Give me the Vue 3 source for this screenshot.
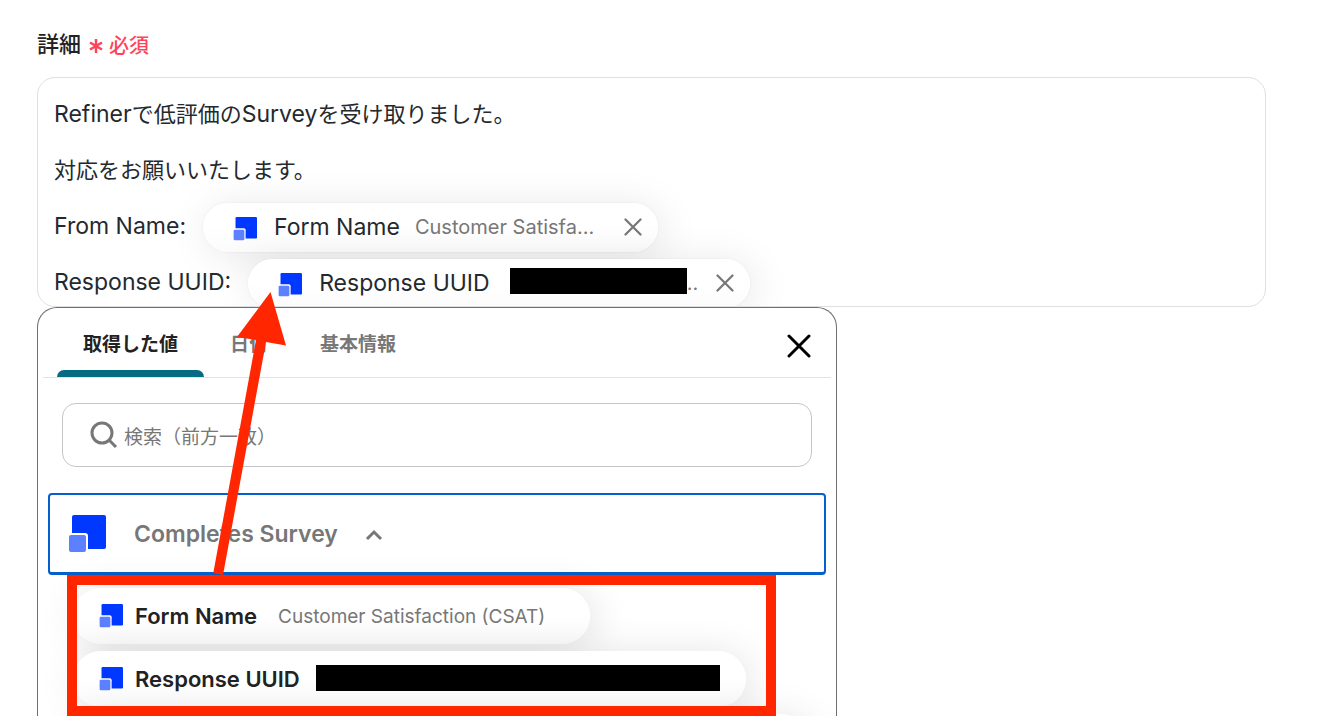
<script setup>
import { ref } from 'vue'

const fields = [
  { label: 'From Name:', name: 'Form Name', value: 'Customer Satisfa...' },
  { label: 'Response UUID:', name: 'Response UUID', masked: true }
]
const tabs = ['取得した値', '日付', '基本情報']
const active = ref(0)
const query = ref('')
</script>

<template>
  <main class="page">
    <svg class="defs" aria-hidden="true">
      <symbol id="brand" viewBox="0 0 38 38">
        <rect x="4" y="0" width="34" height="34" rx="2" fill="#0038ff" />
        <rect x="-1" y="18" width="21" height="22" rx="3" fill="#fff" />
        <rect x="1" y="20" width="17" height="17" rx="2" fill="#5c80ff" />
      </symbol>
      <symbol id="cross" viewBox="0 0 24 24">
        <path d="M2 2 22 22M22 2 2 22" fill="none" stroke="currentColor" stroke-linecap="round" />
      </symbol>
    </svg>

    <div class="heading">
      <span id="detail-label" class="title">詳細</span>
      <span class="required">
        <svg class="star" viewBox="0 0 14 16" aria-hidden="true">
          <path d="M7 1v14M1 4.500l12 7M13 4.500l-12 7" fill="none" stroke="currentColor" stroke-width="2.500" />
        </svg>
        必須
      </span>
    </div>

    <div class="editor" role="textbox" aria-multiline="true" aria-labelledby="detail-label" tabindex="0">
      <p class="line sentence"><span><span class="latin">Refiner</span>で低評価の<span class="latin">Survey</span>を受け取りました。</span></p>
      <p class="line sentence">対応をお願いいたします。</p>
      <p v-for="f in fields" :key="f.label" class="line">
        <span>{{ f.label }}</span>
        <span class="chip" :class="{ 'chip-masked': f.masked }">
          <svg class="chip-icon" aria-hidden="true"><use href="#brand" /></svg>
          <span class="chip-name">{{ f.name }}</span>
          <span v-if="f.masked" class="masked"><span class="mask"></span>..</span>
          <span v-else class="chip-value">{{ f.value }}</span>
          <button class="remove" type="button" :aria-label="f.name + 'を削除'">
            <svg aria-hidden="true"><use href="#cross" /></svg>
          </button>
        </span>
      </p>
    </div>

    <section class="panel">
      <header class="panel-head">
        <div class="tabs" role="tablist">
          <button
            v-for="(t, i) in tabs"
            :key="t"
            type="button"
            role="tab"
            class="tab"
            :class="{ active: i === active }"
            :aria-selected="i === active"
            @click="active = i"
          >{{ t }}</button>
        </div>
        <button class="close" type="button" aria-label="閉じる">
          <svg aria-hidden="true"><use href="#cross" /></svg>
        </button>
      </header>

      <label class="search">
        <svg viewBox="0 0 28 28" aria-hidden="true">
          <circle cx="12" cy="12" r="10" fill="none" stroke="currentColor" stroke-width="3" />
          <path d="M19 19l7 7" stroke="currentColor" stroke-width="3" />
        </svg>
        <input v-model="query" type="search" placeholder="検索（前方一致）" aria-label="検索（前方一致）" />
      </label>

      <button class="group" type="button" aria-expanded="true">
        <svg class="group-icon" aria-hidden="true"><use href="#brand" /></svg>
        <span>Completes Survey</span>
        <svg class="chevron" viewBox="0 0 18 12" aria-hidden="true">
          <path d="M2 10 9 3l7 7" fill="none" stroke="currentColor" stroke-width="3" />
        </svg>
      </button>

      <div class="items">
        <button class="item" type="button">
          <svg class="chip-icon" aria-hidden="true"><use href="#brand" /></svg>
          <span class="item-name">Form Name</span>
          <span class="item-value">Customer Satisfaction (CSAT)</span>
        </button>
        <button class="item item-masked" type="button">
          <svg class="chip-icon" aria-hidden="true"><use href="#brand" /></svg>
          <span class="item-name">Response UUID</span>
          <span class="mask mask-long"></span>
        </button>
        <div class="item item-next" aria-hidden="true"></div>
      </div>
    </section>

    <div class="frame" aria-hidden="true"></div>
    <svg class="arrow" viewBox="0 0 80 290" aria-hidden="true">
      <path d="M60.500 2 76 55.500 56 52 13 285 3.300 283 46 50 27 47z" fill="#ff2600" />
    </svg>
  </main>
</template>

<style>
html, body { margin: 0; background: #fff; }
</style>

<style scoped>
.page {
  position: relative;
  box-sizing: border-box;
  height: 100vh;
  padding: 24px 58px 0 37px;
  overflow: hidden;
  display: flex;
  flex-direction: column;
  background: #fff;
  color: #222;
  font-family: Inter, "Noto Sans CJK JP", sans-serif;
}
.page *, .page *::before { box-sizing: border-box; }
.defs { position: absolute; width: 0; height: 0; }
button { margin: 0; padding: 0; border: 0; background: none; font: inherit; color: inherit; text-align: left; }

.heading { display: flex; align-items: center; gap: 8px; height: 40px; margin-bottom: 13px; flex: none; }
.title { font-size: 22px; font-weight: 500; line-height: 40px; }
.required { display: flex; align-items: center; gap: 6px; color: #ff4358; font-size: 20px; font-weight: 500; }
.star { width: 14px; height: 16px; margin-top: 4px; }

.editor {
  flex: none;
  height: 230px;
  padding: 8px 16px 0;
  overflow: hidden;
  border: 1px solid #dedfe3;
  border-radius: 18px;
  outline: none;
  color: #24292e;
  font-size: 23px;
}
.line { display: flex; align-items: center; gap: 17px; height: 56px; margin: 0; white-space: nowrap; }
.sentence { padding-bottom: 5px; font-size: 22px; }
.latin { font-size: 23px; }
.chip {
  display: flex;
  align-items: center;
  height: 49px;
  margin-top: 2px;
  padding: 0 16px 0 30px;
  border-radius: 25px;
  background: linear-gradient(#fff 50%, #fbfbfb);
  box-shadow: 0 0 2px rgba(0, 0, 0, .08), 4px 4px 40px rgba(0, 0, 0, .1);
}
.chip-icon { width: 24px; height: 24px; flex: none; overflow: visible; }
.chip .chip-icon { margin-top: 3px; }
.chip-name { margin-left: 17px; }
.chip-value { margin-left: 15px; color: #777; font-size: 20px; }
.masked { display: flex; align-items: center; margin-left: 20px; color: #777; font-size: 20px; }
.mask { width: 177px; height: 26px; margin-bottom: 4px; background: #000; }
.remove { display: flex; margin-left: 30px; color: #777; }
.chip-masked .remove { margin-left: 18px; }
.remove svg { width: 18px; height: 18px; stroke-width: 3; }

.panel {
  flex: 1;
  width: 100%;
  max-width: 800px;
  min-height: 0;
  padding: 0 5px;
  border: 1px solid #6f6f73;
  border-bottom: 0;
  border-radius: 20px 20px 0 0;
  background: #fff;
}
.panel-head { display: flex; justify-content: space-between; height: 70px; padding-right: 20px; border-bottom: 1px solid #e2e2e2; }
.tabs { display: flex; margin-left: 14px; }
.tab { position: relative; padding: 2px 26px 0; color: #777; font-size: 19px; font-weight: 600; line-height: 70px; }
.tab.active { color: #222; }
.tab.active::before {
  content: "";
  position: absolute;
  left: 0;
  right: 0;
  bottom: 0;
  height: 7px;
  border-radius: 7px 7px 0 0;
  background: #076c83;
}
.close { display: flex; align-items: center; padding-top: 6px; color: #000; }
.close svg { width: 24px; height: 24px; stroke-width: 3; }

.search {
  display: flex;
  align-items: center;
  gap: 6px;
  height: 64px;
  margin: 25px 19px 0;
  padding: 0 27px;
  border: 1px solid #c6c6c8;
  border-radius: 14px;
  color: #777;
}
.search svg { width: 28px; height: 28px; flex: none; }
.search input { flex: 1; min-width: 0; height: 36px; margin-top: 4px; padding: 0; border: 0; outline: 0; background: none; color: #222; font: inherit; font-size: 19px; }
.search input::placeholder { color: #777; opacity: 1; }

.group {
  display: flex;
  align-items: center;
  width: calc(100% - 10px);
  height: 82px;
  margin: 26px 5px 0;
  padding: 0 18px;
  border: 2px solid #0560cc;
  border-bottom-width: 3px;
  border-radius: 4px;
  color: #777;
  font-size: 23px;
  font-weight: 600;
}
.group-icon { width: 38px; height: 38px; overflow: visible; }
.group span { margin-left: 28px; }
.chevron { width: 18px; height: 12px; margin: 3px 0 0 27px; }

.items { display: flex; flex-direction: column; align-items: flex-start; gap: 7px; padding: 13px 0 0 30px; }
.item {
  display: flex;
  align-items: center;
  height: 56px;
  padding: 0 45px 0 26px;
  border-radius: 28px;
  background: linear-gradient(#fff 50%, #fbfbfb);
  box-shadow: 4px 4px 40px rgba(0, 0, 0, .12);
  white-space: nowrap;
}
.item-masked { padding-right: 26px; }
.item-next { width: 735px; }
.item-name { margin-left: 12px; font-size: 22px; font-weight: 600; }
.item-value { margin-left: 21px; color: #777; font-size: 19px; }
.mask-long { width: 404px; margin: 0 0 2px 16px; }

.frame { position: absolute; left: 67px; top: 575px; width: 709px; height: 141px; border: 10px solid #ff2600; }
.arrow { position: absolute; left: 210px; top: 290px; width: 80px; height: 290px; }
</style>
